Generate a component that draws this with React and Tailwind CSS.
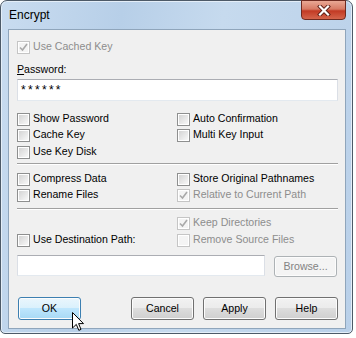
import React from 'react';

function Box({ checked, disabled }) {
  return (
    <span
      className={`relative flex w-[13px] h-[13px] shrink-0 border p-px bg-white ${
        disabled ? 'border-[#c5c5c5]' : 'border-[#8e8f8f]'
      }`}
    >
      <span
        className={`flex-1 ${
          disabled ? 'bg-[#f4f4f4]' : 'bg-gradient-to-br from-[#d4d4d4] to-[#f8f8f8]'
        }`}
      />
      {checked && (
        <svg className="absolute left-0 top-0" width="11" height="11" viewBox="0 0 11 11">
          <path d="M2 5.5 L4.5 8 L9 2" fill="none" stroke="#a9a9a9" strokeWidth="1.6" />
        </svg>
      )}
    </span>
  );
}

function Check({ label, checked, disabled, className = '' }) {
  return (
    <div className={`flex items-center h-[16px] gap-[3px] ${className}`}>
      <Box checked={checked} disabled={disabled} />
      <span className={disabled ? 'text-[#8d8d8d]' : 'text-black'}>{label}</span>
    </div>
  );
}

function Btn({ children, focused, disabled, className = '' }) {
  let look =
    'border-[#707070] bg-[linear-gradient(#f2f2f2_0%,#ebebeb_50%,#dddddd_50%,#cfcfcf_100%)] text-black';
  if (focused)
    look =
      'border-[#3c7fb1] bg-[linear-gradient(#eaf6fd_0%,#d9f0fc_50%,#bee6fd_50%,#a7d9f5_100%)] text-black';
  if (disabled) look = 'border-[#adb2b5] bg-[#f4f4f4] text-[#838383]';
  return (
    <div
      className={`flex items-center justify-center rounded-[3px] border shadow-[inset_0_0_0_1px_#fcfcfc] ${look} ${className}`}
    >
      {children}
    </div>
  );
}

export default function App() {
  return (
    <div className="relative w-[356px] h-[338px] bg-white overflow-hidden font-['Liberation_Sans',sans-serif] text-[10.6px]">
      <div className="relative w-[353px] h-[334px] flex flex-col rounded-t-[7px] rounded-b-[5px] border border-[#4d5a68] bg-[linear-gradient(100deg,#c9dcf0_0%,#b7cfe8_30%,#c6daee_55%,#b9d0e9_100%)] shadow-[inset_0_0_0_1px_#e4eef8]">
        <div className="h-[28px] flex items-center pl-[8px] text-[12px] text-black">Encrypt</div>

        <div className="absolute left-[300px] top-[-1px] w-[45px] h-[20px] rounded-b-[4px] border border-[#6e2a20] bg-[linear-gradient(#e9a895_0%,#d77a64_45%,#c23a24_55%,#d4654c_100%)] flex items-center justify-center">
          <svg width="14" height="11" viewBox="0 0 14 11">
            <path d="M3 1.5 L11 9.5 M11 1.5 L3 9.5" stroke="#5a1e16" strokeWidth="4" strokeLinecap="square" />
            <path d="M3 1.5 L11 9.5 M11 1.5 L3 9.5" stroke="#ffffff" strokeWidth="2.2" strokeLinecap="square" />
          </svg>
        </div>

        <div className="ml-[7px] mr-[6px] mb-[4px] h-[300px] border border-[#8fa5bb] bg-[#f0f0f0] pl-[8px] pr-[7px] pt-[9px] flex flex-col">
          <Check label="Use Cached Key" checked disabled />

          <div className="mt-[8px] h-[14px] flex items-center">
            <span>
              <span className="underline">P</span>assword:
            </span>
          </div>

          <div className="mt-[2px] h-[22px] border border-[#abadb3] border-b-[#e3e9ef] border-x-[#dbdfe6] bg-white flex items-center pl-[3px] text-[12px] tracking-[2.3px]">
            ******
          </div>

          <div className="mt-[10px] flex">
            <div className="w-[160px] flex flex-col">
              <Check label="Show Password" />
              <Check label="Cache Key" />
              <Check label="Use Key Disk" className="mt-px" />
            </div>
            <div className="flex flex-col">
              <Check label="Auto Confirmation" />
              <Check label="Multi Key Input" />
            </div>
          </div>

          <div className="mt-[3px] h-[2px] border-t border-[#a0a0a0] border-b-white border-b" />

          <div className="mt-[6px] flex">
            <div className="w-[160px] flex flex-col">
              <Check label="Compress Data" />
              <Check label="Rename Files" />
            </div>
            <div className="flex flex-col">
              <Check label="Store Original Pathnames" />
              <Check label="Relative to Current Path" checked disabled />
            </div>
          </div>

          <div className="mt-[5px] h-[2px] border-t border-[#a0a0a0] border-b-white border-b" />

          <div className="mt-[5px] flex">
            <div className="w-[160px] flex flex-col justify-end">
              <Check label="Use Destination Path:" />
            </div>
            <div className="flex flex-col">
              <Check label="Keep Directories" checked disabled />
              <Check label="Remove Source Files" disabled className="mt-px" />
            </div>
          </div>

          <div className="mt-[7px] flex gap-[9px]">
            <div className="w-[248px] h-[21px] border border-[#abadb3] border-b-[#e3e9ef] border-x-[#dbdfe6] bg-white" />
            <Btn disabled className="w-[63px] h-[21px] mt-px">Browse...</Btn>
          </div>

          <div className="mt-[20px] flex">
            <Btn focused className="ml-px w-[63px] h-[23px]">OK</Btn>
            <div className="flex-1" />
            <div className="flex gap-[9px]">
              <Btn className="w-[63px] h-[23px]">Cancel</Btn>
              <Btn className="w-[63px] h-[23px]">Apply</Btn>
              <Btn className="w-[63px] h-[23px]">Help</Btn>
            </div>
          </div>
        </div>
      </div>

      <svg className="absolute left-[72px] top-[312px]" width="13" height="20" viewBox="0 0 13 20">
        <path d="M0.5 0.5 L0.5 16 L4.3 12.4 L6.8 18.3 L9 17.4 L6.6 11.6 L11.5 11.6 Z" fill="#ffffff" stroke="#000000" strokeWidth="1" strokeLinejoin="round" />
      </svg>
    </div>
  );
}
